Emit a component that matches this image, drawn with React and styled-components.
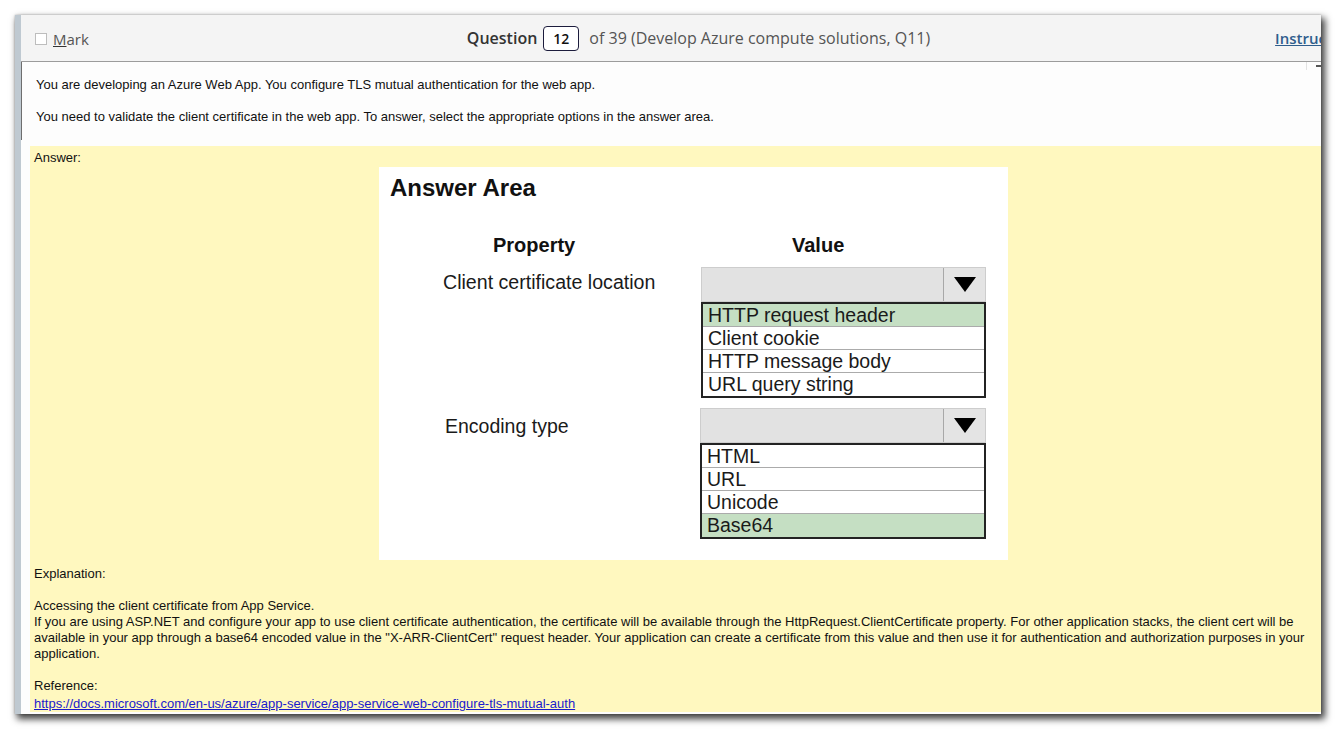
import React from 'react'
import styled, { createGlobalStyle } from 'styled-components';

const GlobalStyle = createGlobalStyle`
    html, body {
        margin: 0;
        padding: 0;
        background: #ffffff;
        font-family: "Liberation Sans", Arial, sans-serif;
    }
`;

const propertyRows = [
    {
        label: 'Client certificate location',
        labelSize: 19.6,
        labelTop: 3,
        labelLeft: 64,
        options: ['HTTP request header', 'Client cookie', 'HTTP message body', 'URL query string'],
        correct: 0,
    },
    {
        label: 'Encoding type',
        labelSize: 19.5,
        labelTop: 6,
        labelLeft: 66,
        options: ['HTML', 'URL', 'Unicode', 'Base64'],
        correct: 3,
    },
];

function Dropdown({ options, correct, shift }) {
    return (
        <DropColumn $shift={shift}>
            <Select>
                <SelectField />
                <SelectButton>
                    <svg width="24" height="17" viewBox="0 0 24 17">
                        <polygon points="1,1 23,1 12,16" fill="#000" />
                    </svg>
                </SelectButton>
            </Select>
            <OptionList>
                {options.map((opt, i) => (
                    <OptionItem key={opt} $picked={i === correct}>{opt}</OptionItem>
                ))}
            </OptionList>
        </DropColumn>
    )
}

function App() {
    return (
        <Page>
            <GlobalStyle />
            <Window>
                <Header>
                    <MarkBox>
                        <Check />
                        <MarkLabel><u>M</u>ark</MarkLabel>
                    </MarkBox>
                    <QuestionInfo>
                        <QuestionWord>Question</QuestionWord>
                        <NumberBox>12</NumberBox>
                        <OfText>of 39 (Develop Azure compute solutions, Q11)</OfText>
                    </QuestionInfo>
                    <Instructions>Instructions</Instructions>
                </Header>

                <Prompt>
                    <PromptLine>You are developing an Azure Web App. You configure TLS mutual authentication for the web app.</PromptLine>
                    <PromptLine>You need to validate the client certificate in the web app. To answer, select the appropriate options in the answer area.</PromptLine>
                    <ScrollTick />
                </Prompt>

                <AnswerPanel>
                    <PlainLine>Answer:</PlainLine>
                    <AnswerCard>
                        <CardTitle>Answer Area</CardTitle>
                        <HeadRow>
                            <HeadCell $pad={114}>Property</HeadCell>
                            <HeadCell $pad={0}>Value</HeadCell>
                        </HeadRow>
                        {propertyRows.map((row, i) => (
                            <PropRow key={row.label}>
                                <PropLabel $size={row.labelSize} $top={row.labelTop} $left={row.labelLeft}>
                                    {row.label}
                                </PropLabel>
                                <Dropdown options={row.options} correct={row.correct} shift={i === 0 ? 0 : -1} />
                            </PropRow>
                        ))}
                    </AnswerCard>

                    <Explanation>
                        <PlainLine>Explanation:</PlainLine>
                        <PlainLine>&nbsp;</PlainLine>
                        <PlainLine>Accessing the client certificate from App Service.</PlainLine>
                        <PlainLine>
                            If you are using ASP.NET and configure your app to use client certificate authentication, the certificate will be available through the HttpRequest.ClientCertificate property. For other application stacks, the client cert will be<br />
                            available in your app through a base64 encoded value in the "X-ARR-ClientCert" request header. Your application can create a certificate from this value and then use it for authentication and authorization purposes in your<br />
                            application.
                        </PlainLine>
                        <PlainLine>&nbsp;</PlainLine>
                        <PlainLine>Reference:</PlainLine>
                        <RefLink href="#">https://docs.microsoft.com/en-us/azure/app-service/app-service-web-configure-tls-mutual-auth</RefLink>
                    </Explanation>
                </AnswerPanel>
            </Window>
        </Page>
    )
}

const Page = styled.div`
    padding: 15px 0 0 15px;
    width: 1338px;
    height: 736px;
    box-sizing: border-box;
    overflow: hidden;
`;

const Window = styled.div`
    width: 1306px;
    height: 699px;
    box-sizing: border-box;
    display: flex;
    flex-direction: column;
    overflow: hidden;
    background: #fdfdfd;
    border-left: 6px solid #bfc9d1;
    padding-bottom: 3px;
    box-shadow: 3px 4px 7px 1px rgba(0, 0, 0, 0.75), 0 0 2px rgba(0, 0, 0, 0.25);
`;

const Header = styled.div`
    flex-shrink: 0;
    width: 1354px;
    height: 47px;
    box-sizing: border-box;
    display: grid;
    grid-template-columns: 1fr auto 1fr;
    align-items: center;
    padding: 0 13px 0 14px;
    background: #f4f4f4;
    border-bottom: 1px solid #9c9c9c;
    font-family: "Open Sans", "Noto Sans", sans-serif;
    font-size: 15px;
`;

const MarkBox = styled.div`
    display: flex;
    align-items: center;
    gap: 6px;
    color: #555;
    padding-top: 1px;
`;

const Check = styled.span`
    width: 12px;
    height: 12px;
    box-sizing: border-box;
    border: 1px solid #bdbdbd;
    background: #fff;
`;

const MarkLabel = styled.span`
    u {
        text-decoration-color: #333;
    }
`;

const QuestionInfo = styled.div`
    display: flex;
    align-items: center;
`;

const QuestionWord = styled.span`
    font-weight: 600;
    color: #333;
    font-size: 16px;
`;

const NumberBox = styled.span`
    margin: 0 10px 0 6px;
    width: 36px;
    height: 25px;
    box-sizing: border-box;
    border: 1px solid #1c1c3c;
    border-radius: 4px;
    background: #fff;
    display: flex;
    align-items: center;
    justify-content: center;
    font-weight: 600;
    font-size: 14px;
    color: #111;
`;

const OfText = styled.span`
    color: #555;
    font-size: 16px;
`;

const Instructions = styled.span`
    justify-self: end;
    color: #2f5d8c;
    font-weight: 600;
    text-decoration: underline;
`;

const Prompt = styled.div`
    position: relative;
    flex-shrink: 0;
    height: 78px;
    box-sizing: border-box;
    border-left: 1px solid #6e6e6e;
    padding: 15px 0 0 14px;
    display: flex;
    flex-direction: column;
    gap: 16px;
`;

const ScrollTick = styled.span`
    position: absolute;
    top: 0;
    right: 0;
    width: 14px;
    height: 8px;
    border-left: 1px solid #e2e2e2;
    &::after {
        content: '';
        position: absolute;
        top: 3px;
        right: 0;
        width: 5px;
        height: 2px;
        background: #555;
    }
`;

const PromptLine = styled.div`
    font-size: 13px;
    line-height: 16px;
    color: #111;
`;

const AnswerPanel = styled.div`
    flex: 1;
    margin: 6px 0 0 9px;
    padding: 4px 14px 0 4px;
    background: #fff8bf;
    color: #111;
`;

const PlainLine = styled.div`
    font-size: 13px;
    line-height: 16px;
    white-space: nowrap;
`;

const AnswerCard = styled.div`
    margin: 1px 0 0 345px;
    width: 629px;
    height: 393px;
    box-sizing: border-box;
    background: #ffffff;
    padding: 7px 0 0 0;
    color: #111;
`;

const CardTitle = styled.div`
    padding-left: 11px;
    font-size: 24px;
    line-height: 28px;
    font-weight: 700;
`;

const HeadRow = styled.div`
    margin-top: 31px;
    display: grid;
    grid-template-columns: 413px auto;
`;

const HeadCell = styled.div`
    padding-left: ${p => p.$pad}px;
    font-size: 20px;
    line-height: 24px;
    font-weight: 700;
`;

const PropRow = styled.div`
    margin-top: 10px;
    display: grid;
    grid-template-columns: 322px 285px;
`;

const PropLabel = styled.div`
    padding: ${p => p.$top}px 0 0 ${p => p.$left}px;
    font-size: ${p => p.$size}px;
    line-height: 24px;
    color: #1a1a1a;
`;

const DropColumn = styled.div`
    margin-left: ${p => p.$shift}px;
    display: flex;
    flex-direction: column;
`;

const Select = styled.div`
    height: 35px;
    display: flex;
    box-sizing: border-box;
    border: 1px solid #cdcdcd;
    background: #e2e2e2;
`;

const SelectField = styled.div`
    flex: 1;
`;

const SelectButton = styled.div`
    width: 41px;
    border-left: 1px solid #a8a8a8;
    background: #e4e4e4;
    display: flex;
    align-items: center;
    justify-content: center;
`;

const OptionList = styled.div`
    border: 2px solid #232323;
    display: flex;
    flex-direction: column;
`;

const OptionItem = styled.div`
    height: 23px;
    box-sizing: border-box;
    padding-left: 5px;
    font-size: 19.5px;
    line-height: 23px;
    color: #1a1a1a;
    white-space: nowrap;
    background: ${p => p.$picked ? '#c5dfc3' : '#ffffff'};
    border-bottom: 1px solid #ababab;
    &:last-child {
        border-bottom: none;
        height: 23px;
    }
`;

const Explanation = styled.div`
    margin-top: 6px;
`;

const RefLink = styled.a`
    color: #1a1acc;
    text-decoration: underline;
    font-size: 13px;
    line-height: 16px;
`;

export default App
